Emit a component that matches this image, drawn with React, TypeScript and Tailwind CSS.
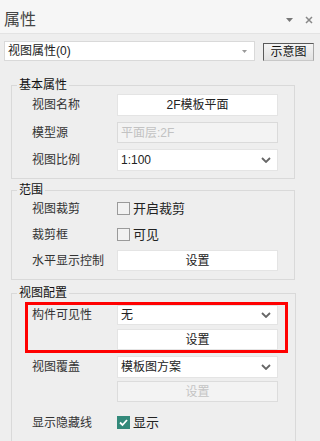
import type { ReactNode } from 'react'

const font = { fontFamily: '"Liberation Sans", "Noto Sans CJK SC", sans-serif' }

function Chevron() {
  return (
    <svg width="10" height="6" viewBox="0 0 10 6" className="shrink-0">
      <polyline points="1,1 5,5 9,1" fill="none" stroke="#666" strokeWidth="1.8" />
    </svg>
  )
}

function Row({ label, children, className = '' }: { label?: string; children: ReactNode; className?: string }) {
  return (
    <div className={`flex items-center ${className}`}>
      <div className="w-[85px] shrink-0 text-[12px] leading-none text-[#333]">{label}</div>
      {children}
    </div>
  )
}

function TextBox({ value, disabled }: { value: string; disabled?: boolean }) {
  if (disabled) {
    return (
      <div className="flex h-[21px] w-[161px] items-center border border-[#dadada] bg-[#f3f3f3] pl-[3px] text-[12px] leading-none text-[#c2c2c2]">
        {value}
      </div>
    )
  }
  return (
    <div className="flex h-[22px] w-[161px] items-center justify-center border border-[#e4e4e4] bg-white text-[12px] leading-none text-[#222]">
      {value}
    </div>
  )
}

function Select({ value, h = 'h-[21px]' }: { value: string; h?: string }) {
  return (
    <div className={`flex ${h} w-[161px] items-center justify-between border border-[#e4e4e4] bg-white pl-[3px] pr-[6px] text-[12px] leading-none text-[#222]`}>
      <span>{value}</span>
      <Chevron />
    </div>
  )
}

function Btn({ children, disabled }: { children: ReactNode; disabled?: boolean }) {
  return (
    <div
      className={`flex h-[21px] w-[161px] items-center justify-center border text-[12px] leading-none ${
        disabled ? 'border-[#dcdcdc] bg-[#f3f3f3] text-[#c4c4c4]' : 'border-[#e4e4e4] bg-white text-[#222]'
      }`}
    >
      {children}
    </div>
  )
}

function Check({ label, checked }: { label: string; checked?: boolean }) {
  return (
    <div className="flex items-center gap-[3px]">
      {checked ? (
        <div className="flex h-[13px] w-[13px] items-center justify-center bg-[#33897a]">
          <svg width="11" height="11" viewBox="0 0 11 11">
            <polyline points="2,5.5 4.5,8 9,3" fill="none" stroke="white" strokeWidth="1.8" />
          </svg>
        </div>
      ) : (
        <div className="h-[13px] w-[13px] border border-[#9a9a9a] bg-[#f2f2f2]" />
      )}
      <span className="text-[13px] leading-none text-[#222]">{label}</span>
    </div>
  )
}

function Group({ title, children, className = '' }: { title: string; children: ReactNode; className?: string }) {
  return (
    <fieldset className={`ml-[11px] w-[284px] border border-[#d9d9d9] ${className}`}>
      <legend className="ml-[5px] px-[2px] text-[12px] leading-[14px] text-[#111]">{title}</legend>
      {children}
    </fieldset>
  )
}

export default function App() {
  return (
    <div className="h-[441px] w-[320px] overflow-hidden bg-[#eeeeee]" style={font}>
      {/* Header */}
      <div className="flex h-[34px] items-center justify-between border-b border-[#e3e3e3] bg-[#f6f6f6] pl-[4px] pr-[7px] pt-[6px]">
        <span className="text-[16px] leading-none text-[#444]">属性</span>
        <div className="flex items-center gap-[12px]">
          <svg width="7" height="4" viewBox="0 0 7 4">
            <polygon points="0,0 7,0 3.5,4" fill="#777" />
          </svg>
          <svg width="8" height="8" viewBox="0 0 8 8">
            <path d="M1 1 L7 7 M7 1 L1 7" stroke="#888" strokeWidth="1.5" />
          </svg>
        </div>
      </div>

      {/* Toolbar */}
      <div className="mt-[7px] flex items-center pl-[4px]">
        <div className="flex h-[20px] w-[251px] items-center justify-between border border-[#d9d9d9] bg-white pl-[3px] pr-[7px] text-[12px] leading-none text-[#222]">
          <span>视图属性(0)</span>
          <svg width="5" height="3" viewBox="0 0 5 3">
            <polygon points="0,0 5,0 2.5,3" fill="#999" />
          </svg>
        </div>
        <div className="ml-[8px] mt-[2px] flex h-[18px] w-[51px] items-center justify-center border-t border-l border-r border-b border-t-[#5a5a5a] border-l-[#5a5a5a] border-r-[#a8a8a8] border-b-[#c8c8c8] bg-gradient-to-b from-[#f4f4f4] to-[#e2e2e2] text-[12px] leading-none text-[#111]">
          示意图
        </div>
      </div>

      {/* 基本属性 */}
      <Group title="基本属性" className="mt-[17px]">
        <div className="flex flex-col pl-[20px] pt-[2px] pb-[7px]">
          <Row label="视图名称">
            <TextBox value="2F模板平面" />
          </Row>
          <Row label="模型源" className="mt-[6px]">
            <TextBox value="平面层:2F" disabled />
          </Row>
          <Row label="视图比例" className="mt-[6px]">
            <Select value="1:100" h="h-[22px]" />
          </Row>
        </div>
      </Group>

      {/* 范围 */}
      <Group title="范围" className="mt-[4px]">
        <div className="flex flex-col pl-[20px] pt-[1px] pb-[8px]">
          <Row label="视图裁剪" className="h-[21px]">
            <Check label="开启裁剪" />
          </Row>
          <Row label="裁剪框" className="mt-[5px] h-[21px]">
            <Check label="可见" />
          </Row>
          <Row label="水平显示控制" className="mt-[5px]">
            <Btn>设置</Btn>
          </Row>
        </div>
      </Group>

      {/* 视图配置 */}
      <Group title="视图配置" className="mt-[6px]">
        <div className="flex flex-col pl-[20px] pt-[2px] pb-[8px]">
          <div className="-ml-[7px] mr-[7px] border-[3px] border-[#ff0000] pl-[4px] pr-[7px]">
            <Row label="构件可见性">
              <Select value="无" h="h-[20px]" />
            </Row>
            <Row className="mt-[4px]">
              <Btn>设置</Btn>
            </Row>
          </div>
          <Row label="视图覆盖" className="mt-[3px]">
            <Select value="模板图方案" h="h-[22px]" />
          </Row>
          <Row className="mt-[3px]">
            <Btn disabled>设置</Btn>
          </Row>
          <Row label="显示隐藏线" className="mt-[10px] h-[21px]">
            <Check label="显示" checked />
          </Row>
        </div>
      </Group>
    </div>
  )
}
